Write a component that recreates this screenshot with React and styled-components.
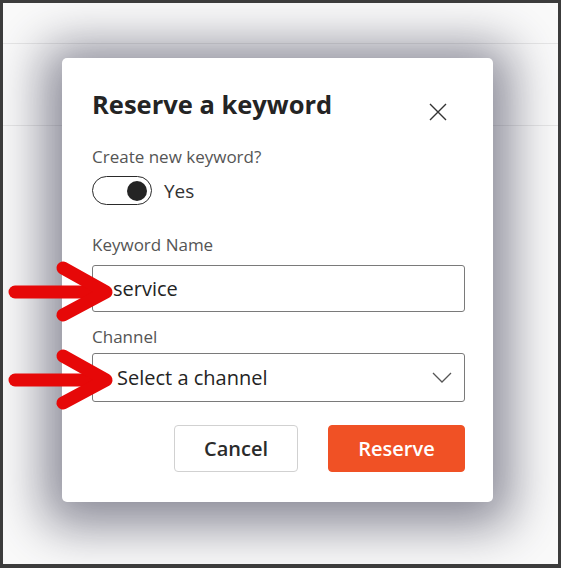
import React from "react";
import styled, { createGlobalStyle } from "styled-components";

const GlobalStyle = createGlobalStyle`
  html, body {
    margin: 0;
    padding: 0;
    background: #3c3c3c;
  }
  body {
    font-family: "Open Sans", "Noto Sans", sans-serif;
  }
`;

const Frame = styled.div`
  position: relative;
  width: 561px;
  height: 568px;
  box-sizing: border-box;
  border: 3px solid #3c3c3c;
  border-bottom-width: 4px;
  background: #fafafa;
  overflow: hidden;
`;

const PageBar = styled.div`
  height: ${(p) => p.h}px;
  border-bottom: 1px solid #e6e6e6;
  box-sizing: border-box;
`;

const Overlay = styled.div`
  position: absolute;
  inset: 0;
  display: flex;
  align-items: flex-start;
  padding: 55px 0 0 59px;
`;

const Modal = styled.div`
  width: 431px;
  height: 444px;
  box-sizing: border-box;
  background: #fff;
  border-radius: 5px;
  box-shadow: 0 6px 50px 18px rgba(45, 45, 70, 0.55);
  padding: 28px 29px 0 30px;
  display: flex;
  flex-direction: column;
`;

const Header = styled.div`
  display: flex;
  align-items: center;
  justify-content: space-between;
  height: 36px;
`;

const Title = styled.h1`
  margin: 0;
  font-size: 25.5px;
  font-weight: 700;
  color: #242424;
`;

const CloseButton = styled.button`
  border: none;
  background: none;
  padding: 0;
  width: 24px;
  height: 24px;
  margin: 16px 14px 0 0;
  display: flex;
  align-items: center;
  justify-content: center;
  color: #333;
`;

const Label = styled.div`
  font-size: 17px;
  color: #555;
  line-height: 22px;
  margin-top: ${(p) => p.mt}px;
`;

const ToggleRow = styled.div`
  display: flex;
  align-items: center;
  gap: 12px;
  margin-top: 8px;
`;

const Switch = styled.div`
  width: 60px;
  height: 29px;
  box-sizing: border-box;
  border: 1px solid #2a2a2a;
  border-radius: 15px;
  display: flex;
  align-items: center;
  justify-content: flex-end;
  padding-right: 4px;
`;

const Knob = styled.div`
  width: 20px;
  height: 20px;
  border-radius: 50%;
  background: #242424;
`;

const ToggleText = styled.span`
  font-size: 19px;
  color: #333;
`;

const Field = styled.div`
  margin-top: ${(p) => p.mt}px;
  height: ${(p) => p.h}px;
  width: 373px;
  box-sizing: border-box;
  border: 1px solid #7a7a7a;
  border-radius: 3px;
  display: flex;
  align-items: center;
  justify-content: space-between;
  padding: 0 12px 0 ${(p) => p.pl}px;
  font-size: 20px;
  color: #242424;
`;

const Actions = styled.div`
  display: flex;
  justify-content: flex-end;
  gap: 30px;
  margin-top: 23px;
  width: 373px;
`;

const Button = styled.button`
  height: 47px;
  width: ${(p) => p.w}px;
  border-radius: 4px;
  font-family: inherit;
  font-size: 20px;
  font-weight: 600;
  border: 1px solid ${(p) => (p.primary ? "#f05125" : "#d1d1d1")};
  background: ${(p) => (p.primary ? "#f05125" : "#fff")};
  color: ${(p) => (p.primary ? "#fff" : "#2b2b2b")};
`;

const Annotation = styled.svg`
  position: absolute;
  left: 0;
  top: 0;
  pointer-events: none;
`;

function Arrow({ y }) {
  return (
    <g
      stroke="#e60808"
      strokeWidth="13"
      strokeLinecap="round"
      strokeLinejoin="round"
      fill="none"
    >
      <line x1="12" y1={y} x2="100" y2={y} />
      <polyline points={`60,${y - 24} 103,${y} 60,${y + 23}`} />
    </g>
  );
}

export default function App() {
  return (
    <>
      <GlobalStyle />
      <Frame>
        <PageBar h={41} />
        <PageBar h={82} />
        <Overlay>
          <Modal>
            <Header>
              <Title>Reserve a keyword</Title>
              <CloseButton aria-label="Close">
                <svg width="18" height="18" viewBox="0 0 18 18">
                  <path
                    d="M1 1 L17 17 M17 1 L1 17"
                    stroke="#333"
                    strokeWidth="1.4"
                  />
                </svg>
              </CloseButton>
            </Header>
            <Label mt={24}>Create new keyword?</Label>
            <ToggleRow>
              <Switch>
                <Knob />
              </Switch>
              <ToggleText>Yes</ToggleText>
            </ToggleRow>
            <Label mt={29}>Keyword Name</Label>
            <Field mt={9} h={47} pl={20}>
              service
            </Field>
            <Label mt={14}>Channel</Label>
            <Field mt={5} h={49} pl={24}>
              Select a channel
              <svg width="20" height="12" viewBox="0 0 20 12">
                <path
                  d="M1 1 L10 10 L19 1"
                  stroke="#555"
                  strokeWidth="1.3"
                  fill="none"
                />
              </svg>
            </Field>
            <Actions>
              <Button w={124}>Cancel</Button>
              <Button primary w={137}>
                Reserve
              </Button>
            </Actions>
          </Modal>
        </Overlay>
        <Annotation width="561" height="568">
          <Arrow y={289} />
          <Arrow y={377} />
        </Annotation>
      </Frame>
    </>
  );
}
